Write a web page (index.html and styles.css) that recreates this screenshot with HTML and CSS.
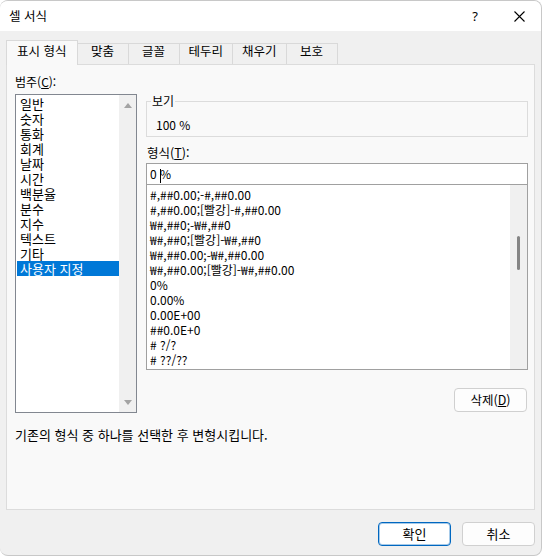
FILE: index.html
```html
<!DOCTYPE html>
<html lang="ko">
<head>
<meta charset="utf-8">
<title>셀 서식</title>
<link rel="stylesheet" href="styles.css">
</head>
<body>
<div class="window">
  <div class="titlebar">
    <span class="title">셀 서식</span>
    <span class="help">?</span>
    <span class="close"><svg width="11" height="11" viewBox="0 0 11 11"><path d="M0.5 0.5 L10.5 10.5 M10.5 0.5 L0.5 10.5" stroke="#000" stroke-width="1.1" fill="none"/></svg></span>
  </div>
  <div class="body">
    <div class="tabs">
      <div class="tab active">표시 형식</div>
      <div class="tab">맞춤</div>
      <div class="tab">글꼴</div>
      <div class="tab">테두리</div>
      <div class="tab">채우기</div>
      <div class="tab">보호</div>
    </div>
    <div class="panel">
      <div class="label">범주(<u>C</u>):</div>
      <div class="main">
        <div class="catlist">
          <ul class="items">
            <li>일반</li>
            <li>숫자</li>
            <li>통화</li>
            <li>회계</li>
            <li>날짜</li>
            <li>시간</li>
            <li>백분율</li>
            <li>분수</li>
            <li>지수</li>
            <li>텍스트</li>
            <li>기타</li>
            <li class="sel">사용자 지정</li>
          </ul>
          <div class="vscroll">
            <span class="arrow up"></span>
            <span class="arrow down"></span>
          </div>
        </div>
        <div class="rightcol">
          <fieldset class="preview">
            <legend>보기</legend>
            <div class="sample">100 %</div>
          </fieldset>
          <div class="label fmt-label">형식(<u>T</u>):</div>
          <div class="input">0 <span class="caret"></span>%</div>
          <div class="fmtlist">
            <ul class="fitems">
              <li>#,##0.00;-#,##0.00</li>
              <li>#,##0.00;[빨강]-#,##0.00</li>
              <li>₩#,##0;-₩#,##0</li>
              <li>₩#,##0;[빨강]-₩#,##0</li>
              <li>₩#,##0.00;-₩#,##0.00</li>
              <li>₩#,##0.00;[빨강]-₩#,##0.00</li>
              <li>0%</li>
              <li>0.00%</li>
              <li>0.00E+00</li>
              <li>##0.0E+0</li>
              <li># ?/?</li>
              <li># ??/??</li>
            </ul>
            <div class="vscroll2"><span class="thumb"></span></div>
          </div>
          <button class="btn delete">삭제(<u>D</u>)</button>
        </div>
      </div>
      <div class="desc">기존의 형식 중 하나를 선택한 후 변형시킵니다.</div>
    </div>
    <div class="actions">
      <button class="btn primary">확인</button>
      <button class="btn">취소</button>
    </div>
  </div>
</div>
</body>
</html>
```

FILE: styles.css
```css
* { box-sizing: border-box; }
html, body { margin: 0; padding: 0; }
body {
  background: #ffffff;
  font-family: "Noto Sans CJK KR", "Noto Sans", sans-serif;
  font-size: 12px;
  color: #000;
}
.window {
  width: 542px;
  height: 556px;
  border: 1px solid #c8c8c8;
  border-left: none;
  border-radius: 8px;
  background: #f0f0f0;
  display: flex;
  flex-direction: column;
  overflow: hidden;
}
.titlebar {
  height: 30px;
  flex: none;
  background: #fff;
  display: flex;
  align-items: center;
  padding-left: 9px;
}
.title { flex: 1; line-height: 14px; font-size: 12.5px; }
.help {
  width: 20px;
  margin-right: 12px;
  text-align: center;
  font-family: "Noto Sans", sans-serif;
  font-size: 13px;
  line-height: 14px;
}
.close {
  width: 44px;
  display: flex;
  justify-content: center;
  align-items: center;
}
.close svg { display: block; }
.body {
  flex: 1;
  display: flex;
  flex-direction: column;
  padding: 9px 6px 0 6px;
}
.tabs {
  display: flex;
  align-items: flex-end;
  height: 24px;
  flex: none;
}
.tab {
  height: 21px;
  min-width: 52px;
  padding: 0 9px;
  border: 1px solid #d9d9d9;
  border-bottom: none;
  margin-left: -1px;
  text-align: center;
  font-size: 12.5px;
  line-height: 14px;
  background: #f0f0f0;
  white-space: nowrap;
}
.tab.active {
  height: 25px;
  margin-left: 0;
  margin-bottom: -1px;
  padding: 3px 10px 0;
  background: #f9f9f9;
  position: relative;
  z-index: 1;
}
.panel {
  height: 446px;
  flex: none;
  border: 1px solid #dcdcdc;
  background: #f9f9f9;
  padding: 10px 6px 0 8px;
  display: flex;
  flex-direction: column;
}
.label { line-height: 14px; }
.main {
  margin-top: 5px;
  display: flex;
  gap: 9px;
  align-items: flex-start;
}
.catlist {
  width: 122px;
  height: 319px;
  flex: none;
  border: 1px solid #828790;
  background: #fff;
  display: flex;
}
.items {
  flex: 1;
  list-style: none;
  margin: 0;
  padding: 1px 0 0 1px;
}
.items li {
  height: 15px;
  line-height: 15px;
  padding-left: 3px;
  font-size: 13px;
  white-space: nowrap;
}
.items li.sel {
  background: #0078d7;
  color: #fff;
}
.vscroll {
  width: 17px;
  flex: none;
  background: #f0f0f0;
  display: flex;
  flex-direction: column;
  justify-content: space-between;
  align-items: center;
  padding: 8px 0 7px;
}
.arrow {
  display: block;
  width: 0;
  height: 0;
  border-left: 4px solid transparent;
  border-right: 4px solid transparent;
}
.arrow.up { border-bottom: 5px solid #a3a3a3; }
.arrow.down { border-top: 5px solid #a3a3a3; }
.rightcol {
  flex: 1;
  display: flex;
  flex-direction: column;
}
.preview {
  margin: 0;
  padding: 0 0 4px 9px;
  border: 1px solid #dcdcdc;
  min-width: 0;
}
.preview legend {
  padding: 0 1px;
  margin-left: -5px;
  line-height: 14px;
}
.sample {
  margin-top: 10px;
  line-height: 14px;
}
.fmt-label { margin: 9px 0 3px 1px; font-size: 12.5px; }
.input {
  height: 22px;
  border: 1px solid #a0a0a0;
  background: #fff;
  padding-left: 3px;
  line-height: 20px;
  white-space: pre;
}
.caret {
  display: inline-block;
  width: 1px;
  height: 14px;
  background: #000;
  vertical-align: middle;
  margin-right: -1px;
}
.fmtlist {
  height: 185px;
  border: 1px solid #a0a0a0;
  border-top: none;
  background: #fff;
  display: flex;
}
.fitems {
  flex: 1;
  list-style: none;
  margin: 0;
  padding: 2px 0 0 3px;
}
.fitems li {
  height: 15px;
  line-height: 15px;
  white-space: nowrap;
}
.vscroll2 {
  width: 17px;
  flex: none;
  background: #f0f0f0;
  display: flex;
  flex-direction: column;
  align-items: center;
}
.thumb {
  display: block;
  width: 3px;
  height: 34px;
  margin-top: 51px;
  border-radius: 2px;
  background: #858585;
}
.btn {
  font: inherit;
  color: #000;
  width: 73px;
  height: 24px;
  padding: 0;
  border: 1px solid #d0d0d0;
  border-radius: 4px;
  background: #fdfdfd;
  line-height: 20px;
}
.delete {
  margin-top: 18px;
  align-self: flex-end;
  margin-right: 1px;
  font-size: 12.5px;
}
.desc {
  margin-top: 15px;
  line-height: 14px;
  font-size: 13px;
}
.actions {
  display: flex;
  justify-content: flex-end;
  gap: 11px;
  margin-top: 12px;
}
.actions .btn { font-size: 13px; }
.primary {
  border: 1px solid #0067c0;
  box-shadow: inset 0 0 0 1px rgba(0, 103, 192, 0.35);
  background: #fff;
}
```
